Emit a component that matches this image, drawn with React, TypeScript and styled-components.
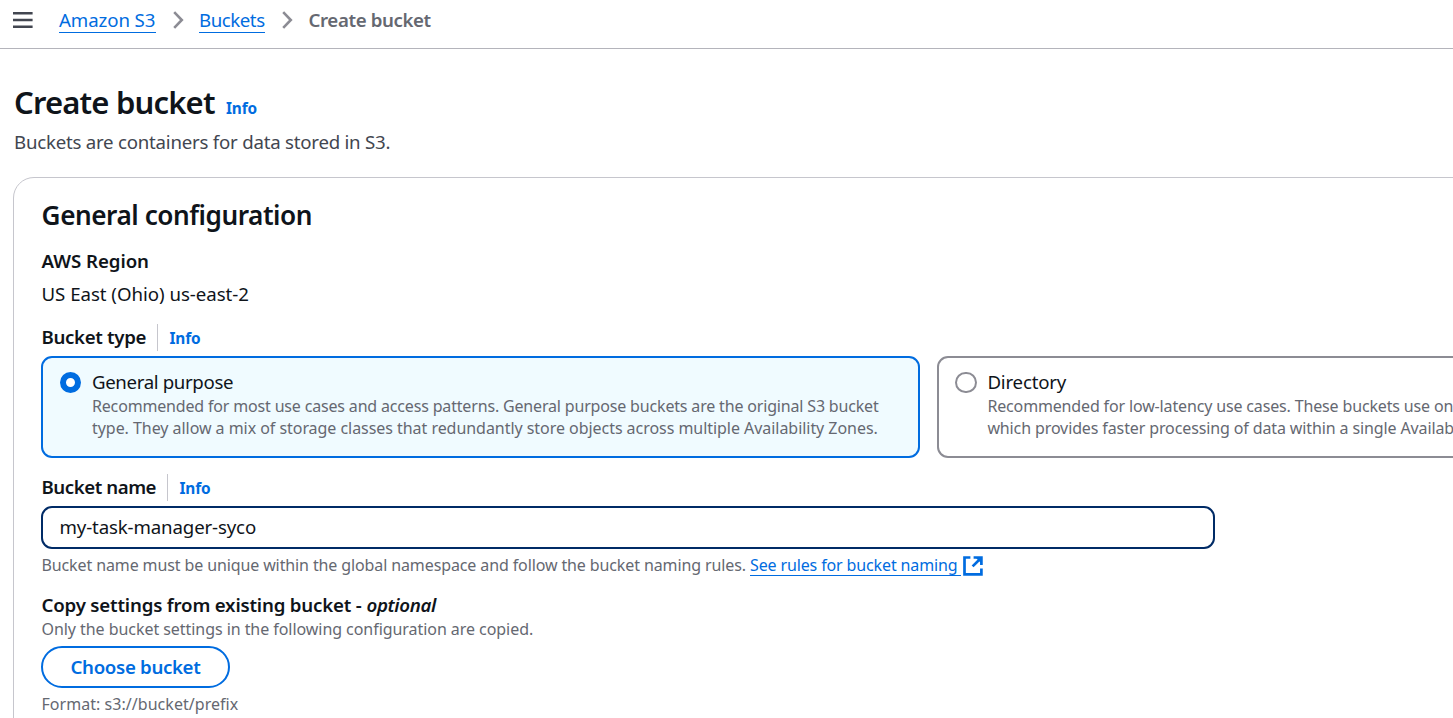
import React from "react";
import styled, { createGlobalStyle, css } from "styled-components";

const blue = "#006ce0";
const ink = "#0f141a";
const muted = "#656871";

const GlobalStyle = createGlobalStyle`
  * { box-sizing: border-box; }
  html, body { margin: 0; overflow: hidden; }
  body {
    background: #fff;
    color: ${ink};
    font-family: "Noto Sans", "Open Sans", sans-serif;
    font-size: 18.67px;
  }
`;

type Tracking = { $track?: number };
const tracking = css<Tracking>`
  letter-spacing: ${(p) => p.$track ?? 0}px;
  white-space: nowrap;
`;

const Page = styled.div`
  height: 718px;
  overflow: hidden;
`;

const TopBar = styled.header`
  height: 49px;
  padding-left: 13px;
  border-bottom: 1px solid #b4b4bb;
  display: flex;
  align-items: flex-start;
`;

const MenuIcon = styled.svg`
  display: block;
  width: 20px;
  height: 18px;
  margin-top: 11px;
  margin-right: 26px;
`;

const Crumbs = styled.nav`
  display: flex;
  align-items: flex-start;
  padding-top: 8px;
`;

const CrumbLink = styled.a<Tracking & { $width: number }>`
  ${tracking}
  width: ${(p) => p.$width}px;
  height: 25px;
  line-height: 24px;
  color: ${blue};
  border-bottom: 1px solid ${blue};
`;

const CrumbCurrent = styled.span<Tracking>`
  ${tracking}
  padding-left: 0.5px;
  line-height: 24px;
  color: ${muted};
  font-weight: 600;
`;

const Chevron = styled.svg`
  display: block;
  width: 12px;
  height: 19px;
  margin: 2px 15px 0 16px;
`;

const PageHeader = styled.div`
  padding: 33px 0 0 14px;
`;

const TitleRow = styled.div`
  display: flex;
  align-items: baseline;
  height: 40px;
`;

const Title = styled.h1<Tracking>`
  ${tracking}
  margin: 0;
  width: 212px;
  font-size: 31px;
  line-height: 40px;
  font-weight: 600;
`;

const InfoLink = styled.a`
  font-size: 15.4px;
  line-height: 22px;
  font-weight: 700;
  letter-spacing: -0.15px;
  color: ${blue};
`;

const Description = styled.p<Tracking>`
  ${tracking}
  margin: 7px 0 0;
  line-height: 26px;
  color: #424650;
`;

const Panel = styled.section`
  margin: 22px 0 0 13px;
  width: 1800px;
  height: 700px;
  padding: 21px 28px 0 27px;
  border: 1px solid #c6c6cd;
  border-radius: 21px;
`;

const PanelTitle = styled.h2<Tracking>`
  ${tracking}
  margin: 0 0 17px;
  padding-left: 0.6px;
  font-size: 26.2px;
  line-height: 33px;
  height: 32px;
  font-weight: 600;
`;

const Label = styled.div<Tracking>`
  ${tracking}
  padding-left: 0.5px;
  line-height: 26px;
  font-weight: 600;
`;

const Value = styled.div<Tracking>`
  ${tracking}
  margin-top: 7px;
  padding-left: 0.5px;
  line-height: 26px;
`;

const LabelRow = styled.div<{ $gap: number }>`
  display: flex;
  height: 27px;
  margin: ${(p) => p.$gap}px 0 5px;
`;

const LabelSlot = styled.div<{ $width: number }>`
  width: ${(p) => p.$width}px;
  border-right: 1px solid #c6c6cd;
  margin-right: 11.5px;
`;

const LabelInfo = styled(InfoLink)`
  line-height: 30px;
`;

const Tiles = styled.div`
  display: flex;
  gap: 17px;
`;

const Tile = styled.div<{ $selected?: boolean }>`
  flex: none;
  display: flex;
  width: 879px;
  height: 102px;
  padding: 12px 17px 0;
  border: 2px solid ${(p) => (p.$selected ? blue : "#8c8c94")};
  border-radius: 11px;
  background: ${(p) => (p.$selected ? "#f0fbff" : "#fff")};
`;

const Radio = styled.span<{ $selected?: boolean }>`
  flex: none;
  width: 21.4px;
  height: 21.4px;
  margin: 1.8px 10.6px 0 ${(p) => (p.$selected ? 0 : -0.6)}px;
  border-radius: 50%;
  background: #fff;
  border: ${(p) => (p.$selected ? `6.4px solid ${blue}` : "2.6px solid #8c8c94")};
`;

const TileTitle = styled.div<Tracking>`
  ${tracking}
  line-height: 24px;
  margin-bottom: 1px;
`;

const Note = styled.div<Tracking>`
  ${tracking}
  font-size: 16px;
  line-height: 22px;
  color: ${muted};
`;

const Field = styled.div`
  width: 1174px;
  height: 43px;
  padding-left: 16.5px;
  border: 2px solid #002b66;
  border-radius: 11px;
  line-height: 38px;
`;

const FieldText = styled.span<Tracking>`
  ${tracking}
`;

const Hint = styled(Note)`
  margin-top: 5px;
  height: 22px;
  padding-left: 0.5px;
  display: flex;
`;

const HintText = styled.span`
  width: 708.5px;
`;

const RulesLink = styled.a<Tracking>`
  ${tracking}
  width: 211px;
  color: ${blue};
  border-bottom: 1px solid ${blue};
`;

const ExternalIcon = styled.svg`
  display: block;
  width: 20px;
  height: 20px;
  margin: 2px 0 0 2px;
`;

const CopyLabel = styled(Label)`
  margin-top: 16px;
  display: flex;
`;

const LabelLead = styled.span`
  width: 325px;
`;

const Optional = styled.em<Tracking>`
  ${tracking}
`;

const PlainNote = styled(Note)`
  padding-left: 0.5px;
`;

const ChooseButton = styled.button<Tracking>`
  ${tracking}
  display: block;
  width: 189px;
  height: 42px;
  margin: 6px 0 5px;
  padding: 0;
  border: 2px solid ${blue};
  border-radius: 21px;
  background: #fff;
  color: ${blue};
  font-family: inherit;
  font-size: 18.67px;
  line-height: 38px;
  font-weight: 600;
`;

const Separator = () => (
  <Chevron viewBox="0 0 12 19" fill="none" stroke="#8c8c94" strokeWidth="2.6">
    <path d="M2.2 2.2 9.8 10 2.2 17.8" />
  </Chevron>
);

export default function App() {
  return (
    <Page>
      <GlobalStyle />
      <TopBar>
        <MenuIcon viewBox="0 0 20 18" stroke="#424650" strokeWidth="2.4">
          <path d="M0 2.2H19.6M0 9H19.6M0 15.8H19.6" />
        </MenuIcon>
        <Crumbs>
          <CrumbLink $width={97} $track={-0.1}>Amazon S3</CrumbLink>
          <Separator />
          <CrumbLink $width={66} $track={-0.45}>Buckets</CrumbLink>
          <Separator />
          <CrumbCurrent $track={-0.38}>Create bucket</CrumbCurrent>
        </Crumbs>
      </TopBar>

      <PageHeader>
        <TitleRow>
          <Title $track={-0.82}>Create bucket</Title>
          <InfoLink>Info</InfoLink>
        </TitleRow>
        <Description $track={-0.23}>Buckets are containers for data stored in S3.</Description>
      </PageHeader>

      <Panel>
        <PanelTitle $track={-0.46}>General configuration</PanelTitle>
        <Label $track={-0.05}>AWS Region</Label>
        <Value $track={-0.03}>US East (Ohio) us-east-2</Value>

        <LabelRow $gap={17}>
          <LabelSlot $width={117}>
            <Label $track={-0.33}>Bucket type</Label>
          </LabelSlot>
          <LabelInfo>Info</LabelInfo>
        </LabelRow>
        <Tiles>
          <Tile $selected>
            <Radio $selected />
            <div>
              <TileTitle $track={-0.36}>General purpose</TileTitle>
              <Note $track={-0.17}>
                Recommended for most use cases and access patterns. General purpose buckets are the original S3 bucket
              </Note>
              <Note $track={-0.045}>
                type. They allow a mix of storage classes that redundantly store objects across multiple Availability Zones.
              </Note>
            </div>
          </Tile>
          <Tile>
            <Radio />
            <div>
              <TileTitle $track={-0.2}>Directory</TileTitle>
              <Note $track={-0.15}>Recommended for low-latency use cases. These buckets use only the S3 Express</Note>
              <Note $track={-0.12}>which provides faster processing of data within a single Availability Zone.</Note>
            </div>
          </Tile>
        </Tiles>

        <LabelRow $gap={16}>
          <LabelSlot $width={127}>
            <Label $track={-0.45}>Bucket name</Label>
          </LabelSlot>
          <LabelInfo>Info</LabelInfo>
        </LabelRow>
        <Field>
          <FieldText $track={-0.14}>my-task-manager-syco</FieldText>
        </Field>
        <Hint $track={-0.115}>
          <HintText>
            Bucket name must be unique within the global namespace and follow the bucket naming rules.
          </HintText>
          <RulesLink $track={-0.13}>See rules for bucket naming</RulesLink>
          <ExternalIcon viewBox="0 0 20 20" fill="none" stroke={blue} strokeWidth="2.7">
            <path d="M7.4 1.5H1.5V18.4H18.4V12.4M10.6 1.5H18.4V9M17.8 2.2 9.6 10.4" />
            <path d="M13 2H18V7Z" fill={blue} stroke="none" />
          </ExternalIcon>
        </Hint>

        <CopyLabel $track={-0.19}>
          <LabelLead>Copy settings from existing bucket -</LabelLead>
          <Optional $track={-0.35}>optional</Optional>
        </CopyLabel>
        <PlainNote $track={-0.055}>
          Only the bucket settings in the following configuration are copied.
        </PlainNote>
        <ChooseButton $track={-0.33}>Choose bucket</ChooseButton>
        <PlainNote $track={0.04}>Format: s3://bucket/prefix</PlainNote>
      </Panel>
    </Page>
  );
}
